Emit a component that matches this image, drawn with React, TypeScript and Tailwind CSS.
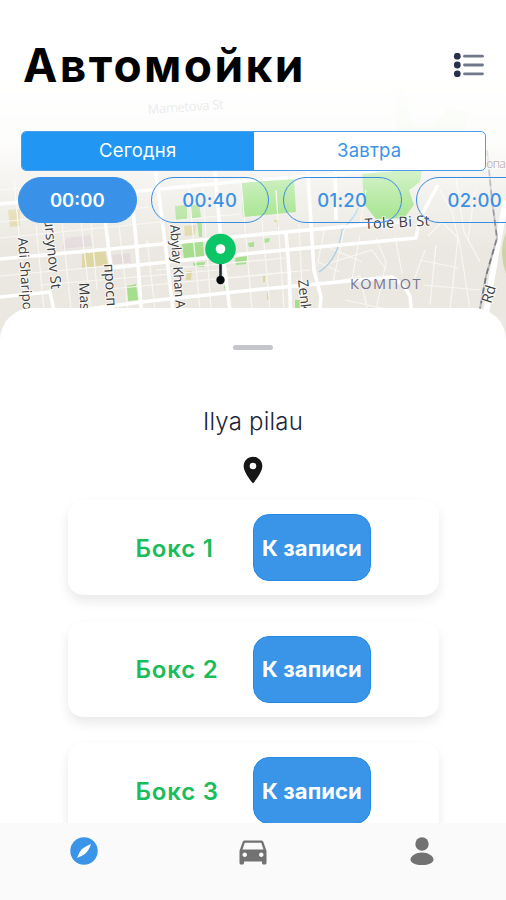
import React from 'react';
import clsx from 'clsx';
import { MdDirectionsCar, MdLocationOn } from 'react-icons/md';

const times = ['00:00', '00:40', '01:20', '02:00'];
const boxes = ['Бокс 1', 'Бокс 2', 'Бокс 3'];

const majorRoads = [
  'M0 204 L150 190 L253 180 L330 175 L430 166',
  'M0 259 L110 249 L253 235 L363 225 L400 222',
  'M110 268 L253 253 L416 238 L420 218 L438 185',
  'M0 297 L50 292 L58 330',
  'M80 310 L150 301 L253 290 L392 277 Q404 284 410 296 L412 320',
  'M103 205 L107 235 L111 270',
  'M131 190 L137 250 L142 320',
  'M155 165 L166 250 L174 320',
  'M213 150 L220 230 L231 320',
  'M286 233 L289 270 L291 320',
  'M307 160 L314 270 L321 297 L319 320',
  'M335 165 L336 220',
];

const minorRoads = [
  'M0 190 L110 180 M0 222 L150 207 M0 238 L240 214 M0 276 L130 264 M40 285 L230 269 M110 289 L290 272',
  'M14 180 L26 310 M36 225 L44 310 M62 222 L71 310 M81 222 L91 310 M91 222 L97 290 M119 225 L128 310',
  'M147 240 L155 310 M156 270 L285 258 M188 180 L200 310 M202 180 L211 310 M241 180 L252 310 M262 220 L270 310',
  'M276 190 L284 310 M299 224 L303 310 M230 278 L310 270 M325 226 L318 262 L340 272 M345 226 L333 282 M360 235 L350 290',
  'M326 264 L372 250 L386 270 M330 248 L362 262 M366 190 L360 224 M376 238 L386 262 L376 310 M395 236 L402 274',
  'M428 236 L442 222 L458 238 L450 310 M440 190 L452 212 L460 245 L470 310 M456 178 L464 232 L480 262 M425 250 L414 280',
  'M436 245 L430 305 M420 260 L458 268 M423 285 L480 290 M475 190 L468 240 M345 300 L400 312 M325 284 L360 276 L368 312',
];

function MapView() {
  return (
    <svg className="absolute inset-x-0 top-0 h-[340px] w-full" viewBox="0 0 506 340">
      <defs>
        <linearGradient id="fade" x1="0" y1="0" x2="0" y2="1">
          <stop offset="0" stopColor="#fff" stopOpacity="1" />
          <stop offset="0.27" stopColor="#fff" stopOpacity="0.98" />
          <stop offset="0.42" stopColor="#fff" stopOpacity="0.88" />
          <stop offset="0.57" stopColor="#fff" stopOpacity="0.42" />
          <stop offset="0.74" stopColor="#fff" stopOpacity="0" />
        </linearGradient>
      </defs>
      <rect width="506" height="340" fill="#ebe8e1" />

      {/* blocks and parks */}
      <g fill="#e4dbdc">
        <path d="M66 238 L90 235 L92 246 L62 249z M112 255 L130 253 L131 263 L113 264z" />
      </g>
      <g fill="#dfd6a5">
        <path d="M8 210 L20 209 L20 226 L10 227z M82 254 L105 250 L108 265 L82 268z M184 226 L196 225 L195 235 L185 236z M187 271 L192 271 L191 280 L186 280z" />
      </g>
      <g fill="#a5de8c">
        <path d="M175 206 L187 205 L187 219 L176 220z M190 206 L199 204 L201 217 L192 219z" />
        <path d="M241 183 L294 178 L296 212 L243 217z" fill="#8fdd72" />
        <path d="M182 244 L203 241 L204 256 L184 258z M197 222 L202 222 L202 237 L199 237z M193 263 L205 262 L204 267 L194 267z M127 286 L136 284 L138 300 L128 301z" />
        <path d="M235 258 L247 256 L246 264 L236 265z M248 243 L254 242 L254 247 L249 247z M224 286 L228 286 L229 291 L225 291z M263 239 L270 238 L269 242 L264 243z M295 300 L300 300 L300 310 L295 310z" />
        <path d="M362 172 L422 170 L420 182 L409 190 L414 205 L404 218 L376 219 L364 204z" fill="#8fdd72" />
        <path d="M395 100 L402 80 L412 125 L436 125 L448 108 L468 112 L464 135 L398 138z" fillOpacity="0.7" />
      </g>
      <path d="M506 232 Q498 252 506 274z" fill="#ced3a6" />
      <g fill="none" stroke="#dcd797" strokeWidth="2">
        <path d="M274 221 h4 v6 M264 276 v6 M268 292 v8" />
      </g>

      {/* streets */}
      <g fill="none" stroke="#f8f6f2" strokeWidth="1.2">
        {minorRoads.map((d) => (
          <path key={d} d={d} />
        ))}
      </g>
      <path d="M358 208 Q356 216 342 230 Q338 260 319 272" fill="none" stroke="#a9cfe6" strokeWidth="1.3" />
      <g fill="none" stroke="#fff" strokeWidth="3.6" strokeLinejoin="round">
        {majorRoads.map((d) => (
          <path key={d} d={d} />
        ))}
      </g>
      <path d="M506 200 Q496 250 485 320" fill="none" stroke="#fff" strokeWidth="6" />
      <path d="M487 150 L492 200 L497 238 L486 276 L478 320" fill="none" stroke="#bbb7bd" strokeWidth="2" />
      <path d="M487 150 L492 200 L497 238 L486 276 L478 320" fill="none" stroke="#77757e" strokeWidth="1.6" strokeDasharray="6 4" />

      <rect width="506" height="340" fill="url(#fade)" />

      {/* labels */}
      <g className="font-['Open_Sans',sans-serif]" fill="#3d3d3d" stroke="#fff" strokeWidth="2" strokeOpacity="0.7" paintOrder="stroke" fontSize="14">
        <text transform="translate(18 238) rotate(86)" fontSize="13.5">Adi Sharipo</text>
        <text transform="translate(44 219) rotate(84)" fontSize="14.5">ursynov St</text>
        <text transform="translate(79 283) rotate(87)">Mas</text>
        <text transform="translate(104 264) rotate(86)" fontSize="14.5">просп</text>
        <text transform="translate(170 225) rotate(86)" fontSize="13.5" textLength="84">Abylay Khan A</text>
        <text transform="translate(298 280) rotate(84)">Zenk</text>
        <text transform="translate(365 229) rotate(-3)" fontSize="14.5" textLength="65">Tole Bi St</text>
        <text transform="translate(491 304) rotate(-73)" fontSize="14.5">Rd</text>
        <text transform="translate(148 114) rotate(-4)" fill="#ececec" fontSize="13" textLength="76">Mametova St</text>
        <text x="486" y="168" fill="#c4b7b5" fontSize="12.5" textLength="20">опа</text>
      </g>
      <text x="350" y="289" className="font-['Open_Sans',sans-serif]" fill="#767492" fontSize="14.5" letterSpacing="1.5">
        КОМПОТ
      </text>

      {/* selected car wash */}
      <path d="M220.500 262 V280" stroke="#1b2a38" strokeWidth="2.6" />
      <circle cx="220.500" cy="280" r="4.200" fill="#05080c" />
      <circle cx="220.500" cy="249" r="15.300" fill="#0bc566" />
      <circle cx="220.500" cy="249" r="4.800" fill="#fff" />
    </svg>
  );
}

function ListIcon() {
  return (
    <svg className="h-6 w-[31px]" viewBox="0 0 31 24">
      {[3.2, 12, 20.8].map((y) => (
        <g key={y}>
          <circle cx="4.300" cy={y} r="3.4" fill="#27324a" />
          <path d={`M11.500 ${y} H29.500`} stroke="#70788a" strokeWidth="2.8" strokeLinecap="round" />
        </g>
      ))}
    </svg>
  );
}

function CompassIcon() {
  return (
    <svg className="h-7 w-7" viewBox="0 0 28 28">
      <circle cx="14" cy="14" r="13.7" fill="#3a94e7" />
      <path d="M21 7 Q18.500 14.500 14.800 17 Q12 19 7 21 Q9 15.500 11.500 12.500 Q14 10 21 7z" fill="#fff" />
    </svg>
  );
}

function PersonIcon() {
  return (
    <svg className="h-7 w-6" viewBox="0 0 24 28">
      <circle cx="12" cy="7" r="6.700" fill="#727272" />
      <path d="M12 15.500 C18 15.500 23.500 19 23.500 22.500 C23.500 26 18.500 28 12 28 C5.500 28 0.500 26 0.500 22.500 C0.500 19 6 15.500 12 15.500z" fill="#727272" />
    </svg>
  );
}

export default function App() {
  return (
    <div className="relative flex h-[900px] w-[506px] flex-col overflow-hidden bg-white font-[Inter,sans-serif]">
      <MapView />

      <header className="relative flex h-[308px] shrink-0 flex-col">
        <div className="flex h-[131px] items-start justify-between pt-[37px] pr-[22px] pl-[23px]">
          <h1 className="text-[46px] leading-14 font-bold tracking-[2.4px] text-black">Автомойки</h1>
          <button className="mt-4">
            <ListIcon />
          </button>
        </div>

        <div className="mr-5 ml-[21px] flex h-10 shrink-0 overflow-hidden rounded-[5px] border border-[#4a9dea] bg-white text-[18.500px] tracking-[0.2px]">
          <button className="flex-1 bg-[#2196f3] text-white">Сегодня</button>
          <button className="flex-1 text-[#3d94e6]">Завтра</button>
        </div>

        <div className="mt-1.5 ml-[18px] flex gap-[14px] overflow-hidden">
          {times.map((time, i) => (
            <button
              key={time}
              className={clsx(
                'h-[46px] w-[118.500px] shrink-0 rounded-full border pt-px text-[18.500px]',
                i === 0 ? 'border-[#3992e7] bg-[#3992e7] font-semibold text-white' : 'border-[#3a8ce0] font-medium tracking-[0.3px] text-[#3b92e5]'
              )}
            >
              {time}
            </button>
          ))}
        </div>
      </header>

      <main className="relative flex min-h-0 flex-1 flex-col items-center overflow-hidden rounded-t-[32px] bg-white">
        <div className="mt-[37px] h-[5px] w-10 shrink-0 rounded-full bg-[#c5c6cc]" />
        <h2 className="mt-14 text-[24px] leading-8 font-light tracking-[0.2px] text-[#20253a]">Ilya pilau</h2>
        <MdLocationOn className="mt-4 size-8 shrink-0 text-[#161616]" />

        <div className="mt-3.5 flex w-[371px] flex-col gap-[26.500px]">
          {boxes.map((box) => (
            <div key={box} className="flex h-[95px] shrink-0 items-center rounded-[15px] bg-white pl-[68px] shadow-[0_6px_12px_rgba(0,0,0,0.09)]">
              <span className="w-[117.500px] pt-0.5 text-[24px] font-semibold tracking-[0.8px] text-[#1abc5c]">{box}</span>
              <button className="h-[67px] w-[118px] rounded-[16px] border border-[#258ae4] bg-[#3a94e7] pt-px text-[22px] font-bold tracking-[0.1px] whitespace-nowrap text-white">
                К записи
              </button>
            </div>
          ))}
        </div>
      </main>

      <nav className="relative flex h-[77px] shrink-0 bg-[#fafafa] pt-3.5">
        <button className="flex h-7 flex-1 items-center justify-center">
          <CompassIcon />
        </button>
        <button className="flex h-7 flex-1 items-center justify-center pl-px">
          <MdDirectionsCar className="size-9 text-[#727272]" />
        </button>
        <button className="flex h-7 flex-1 items-center justify-center">
          <PersonIcon />
        </button>
      </nav>
    </div>
  );
}
